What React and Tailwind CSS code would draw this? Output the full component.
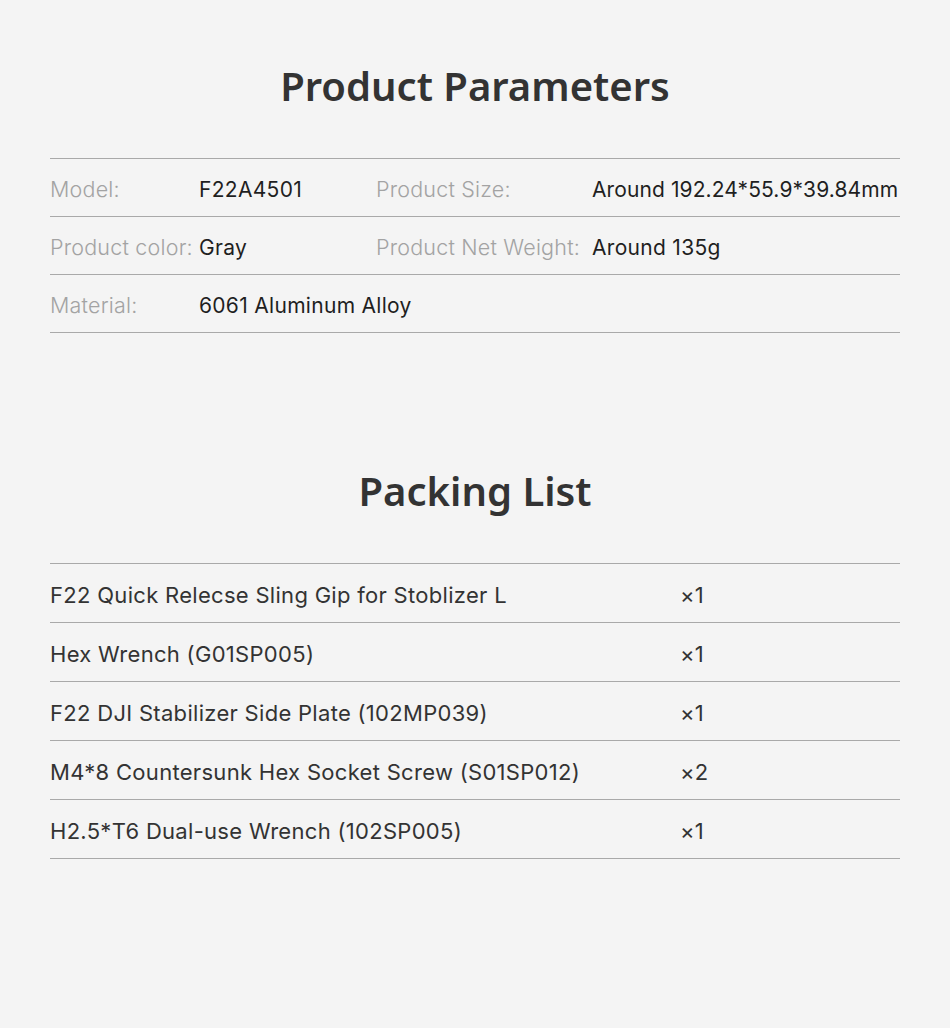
const params = [
  [
    { label: "Model:", value: "F22A4501" },
    { label: "Product Size:", value: "Around 192.24*55.9*39.84mm", tight: true },
  ],
  [
    { label: "Product color:", value: "Gray" },
    { label: "Product Net Weight:", value: "Around 135g" },
  ],
  [{ label: "Material:", value: "6061 Aluminum Alloy" }],
];

const packing = [
  { name: "F22 Quick Relecse Sling Gip for Stoblizer L", qty: "×1" },
  { name: "Hex Wrench (G01SP005)", qty: "×1" },
  { name: "F22 DJI Stabilizer Side Plate (102MP039)", qty: "×1" },
  { name: "M4*8 Countersunk Hex Socket Screw (S01SP012)", qty: "×2" },
  { name: "H2.5*T6 Dual-use Wrench (102SP005)", qty: "×1" },
];

export default function App() {
  return (
    <div
      className="min-h-[1028px] w-[950px] bg-[#f4f4f4] px-[50px]"
      style={{ fontFamily: 'Inter, "Noto Sans", sans-serif' }}
    >
      <h2 className="pt-[60px] text-center font-['Noto_Sans',sans-serif] text-[40px] font-semibold leading-[52px] text-[#333333]">
        Product Parameters
      </h2>

      <div className="mt-[46px] border-t border-[#a9a9a9]">
        {params.map((row, i) => (
          <div
            key={i}
            className="grid h-[58px] grid-cols-[149px_177px_216px_1fr] items-center border-b border-[#a9a9a9] pt-[4px]"
          >
            {row.map((cell) => (
              <div key={cell.label} className="contents">
                <span className="whitespace-nowrap text-[21.5px] font-light tracking-[0.2px] text-[#a3a3a3]">
                  {cell.label}
                </span>
                <span
                  className={
                    cell.tight
                      ? "whitespace-nowrap text-[21px] tracking-[0.1px] text-[#1f1f1f]"
                      : "whitespace-nowrap text-[21px] tracking-[0.3px] text-[#1f1f1f]"
                  }
                >
                  {cell.value}
                </span>
              </div>
            ))}
          </div>
        ))}
      </div>

      <h2 className="pt-[132px] text-center font-['Noto_Sans',sans-serif] text-[40px] font-semibold leading-[52px] text-[#333333]">
        Packing List
      </h2>

      <div className="mt-[46px] border-t border-[#a9a9a9]">
        {packing.map((item) => (
          <div
            key={item.name}
            className="grid h-[59px] grid-cols-[630px_1fr] items-center border-b border-[#a9a9a9] pt-[4px] text-[22px] tracking-[0.3px] text-[#333333]"
          >
            <span className="whitespace-nowrap">{item.name}</span>
            <span>{item.qty}</span>
          </div>
        ))}
      </div>
    </div>
  );
}
